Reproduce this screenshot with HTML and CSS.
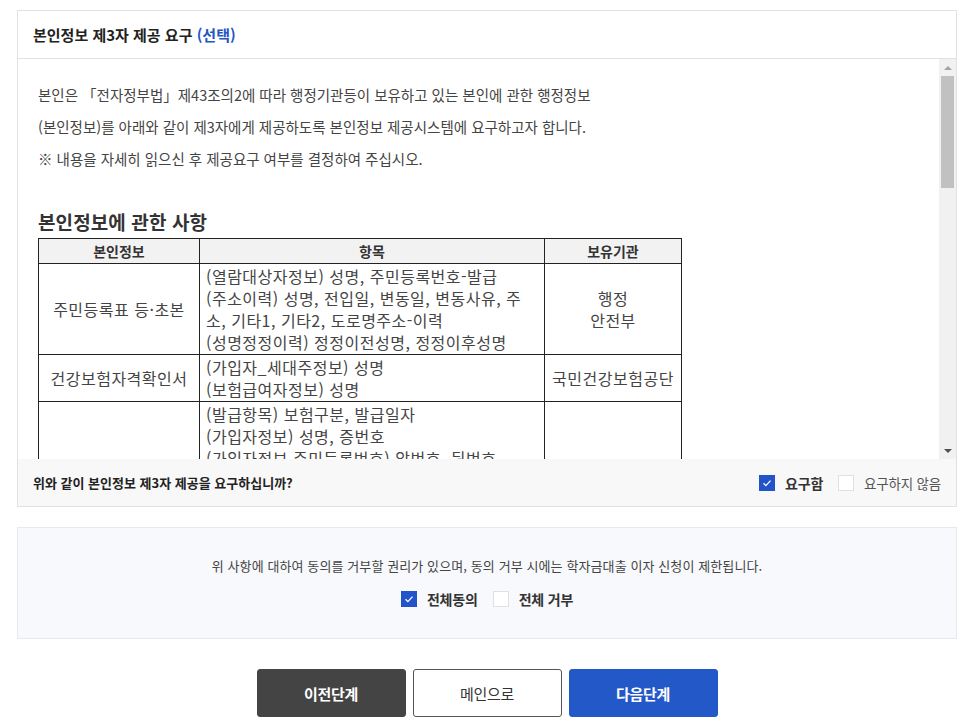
FILE: index.html
```html
<!DOCTYPE html>
<html lang="ko">
<head>
<meta charset="UTF-8">
<title>본인정보 제3자 제공 요구</title>
<link rel="stylesheet" href="styles.css">
</head>
<body>

<div class="agree-box">
  <div class="agree-head">본인정보 제3자 제공 요구 <span class="opt">(선택)</span></div>

  <div class="agree-body">
    <div class="agree-scroll">
      <p>본인은 「전자정부법」제43조의2에 따라 행정기관등이 보유하고 있는 본인에 관한 행정정보</p>
      <p>(본인정보)를 아래와 같이 제3자에게 제공하도록 본인정보 제공시스템에 요구하고자 합니다.</p>
      <p>※ 내용을 자세히 읽으신 후 제공요구 여부를 결정하여 주십시오.</p>

      <h3>본인정보에 관한 사항</h3>
      <table class="info-table">
        <colgroup>
          <col style="width:161px">
          <col style="width:345px">
          <col style="width:137px">
        </colgroup>
        <thead>
          <tr><th>본인정보</th><th>항목</th><th>보유기관</th></tr>
        </thead>
        <tbody>
          <tr>
            <td class="c">주민등록표 등·초본</td>
            <td>(열람대상자정보) 성명, 주민등록번호-발급<br>(주소이력) 성명, 전입일, 변동일, 변동사유, 주<br>소, 기타1, 기타2, 도로명주소-이력<br>(성명정정이력) 정정이전성명, 정정이후성명</td>
            <td class="c">행정<br>안전부</td>
          </tr>
          <tr>
            <td class="c">건강보험자격확인서</td>
            <td>(가입자_세대주정보) 성명<br>(보험급여자정보) 성명</td>
            <td class="c">국민건강보험공단</td>
          </tr>
          <tr>
            <td class="c">건강보험자격득실<br>확인서</td>
            <td>(발급항목) 보험구분, 발급일자<br>(가입자정보) 성명, 증번호<br>(가입자정보 주민등록번호) 앞번호, 뒷번호<br>(자격이력) 가입자구분, 사업장명칭<br>(자격이력) 자격취득일, 자격상실일<br>(세대주정보) 성명, 관계<br>(피부양자정보) 성명, 관계<br>(발급기관) 발급기관명</td>
            <td class="c">국민건강보험공단</td>
          </tr>
          <tr>
            <td class="c">건강보험료<br>납부확인서</td>
            <td>(가입자정보) 성명, 증번호<br>(납부내역) 납부년월, 고지금액<br>(납부내역) 납부금액, 납부일자<br>(발급정보) 발급일자, 발급기관</td>
            <td class="c">국민건강보험공단</td>
          </tr>
          <tr>
            <td class="c">소득금액증명</td>
            <td>(납세자정보) 성명, 주민등록번호<br>(소득내역) 귀속연도, 소득구분<br>(소득내역) 총수입금액, 소득금액<br>(발급정보) 발급번호, 발급일자</td>
            <td class="c">국세청</td>
          </tr>
          <tr>
            <td class="c">가족관계증명서</td>
            <td>(본인정보) 성명, 출생연월일, 주민등록번호<br>(가족정보) 구분, 성명, 출생연월일<br>(가족정보) 주민등록번호, 성별</td>
            <td class="c">법원행정처</td>
          </tr>
        </tbody>
      </table>

      <h3>제공받는 자</h3>
      <p>한국장학재단</p>
      <h3>제공 목적</h3>
      <p>학자금대출 이자지원 신청 자격 확인 및 심사</p>
    </div>
    <div class="scrollbar">
      <span class="sb-arrow up"></span>
      <span class="sb-thumb"></span>
      <span class="sb-track"></span>
      <span class="sb-arrow down"></span>
    </div>
  </div>

  <div class="agree-foot">
    <span class="question">위와 같이 본인정보 제3자 제공을 요구하십니까?</span>
    <div class="checks">
      <label class="chk on"><span class="box"><svg viewBox="0 0 16 16" width="16" height="16"><path d="M4.5 8.2l2.4 2.4 4.6-5" fill="none" stroke="#fff" stroke-width="1.3"/></svg></span><b>요구함</b></label>
      <label class="chk"><span class="box"></span>요구하지 않음</label>
    </div>
  </div>
</div>

<div class="consent-box">
  <p>위 사항에 대하여 동의를 거부할 권리가 있으며, 동의 거부 시에는 학자금대출 이자 신청이 제한됩니다.</p>
  <div class="checks center">
    <label class="chk on"><span class="box"><svg viewBox="0 0 16 16" width="16" height="16"><path d="M4.5 8.2l2.4 2.4 4.6-5" fill="none" stroke="#fff" stroke-width="1.3"/></svg></span><b>전체동의</b></label>
    <label class="chk"><span class="box"></span><b>전체 거부</b></label>
  </div>
</div>

<div class="btn-row">
  <button class="btn dark">이전단계</button>
  <button class="btn line">메인으로</button>
  <button class="btn blue">다음단계</button>
</div>

</body>
</html>
```

FILE: styles.css
```css
body {
  margin: 0;
  padding: 10px 17px 0 17px;
  font-family: "Noto Sans CJK KR", "Noto Sans", sans-serif;
  color: #444;
  background: #fff;
}
.agree-box {
  border: 1px solid #e2e2e2;
}
.agree-head {
  height: 47px;
  line-height: 47px;
  padding-left: 15px;
  border-bottom: 1px solid #e2e2e2;
  font-size: 15px;
  font-weight: bold;
  color: #222;
  letter-spacing: 0;
}
.agree-head .opt {
  color: #2456c4;
}
.agree-body {
  display: flex;
  height: 400px;
}
.agree-scroll {
  flex: 1;
  overflow: hidden;
  padding: 20px 20px 0 20px;
}
.scrollbar {
  width: 17px;
  display: flex;
  flex-direction: column;
  align-items: center;
  background: #f1f1f1;
}
.sb-arrow {
  width: 17px;
  height: 17px;
  display: flex;
  align-items: center;
  justify-content: center;
}
.sb-arrow::before {
  content: "";
  border-left: 4px solid transparent;
  border-right: 4px solid transparent;
}
.sb-arrow.up::before {
  border-bottom: 4px solid #a3a3a3;
}
.sb-arrow.down::before {
  border-top: 4px solid #505050;
}
.sb-thumb {
  width: 13px;
  height: 112px;
  background: #c1c1c1;
}
.sb-track {
  flex: 1;
}
.agree-scroll p {
  margin: 0;
  font-size: 14.5px;
  line-height: 32px;
  color: #444;
  letter-spacing: 0;
}
.agree-scroll h3 {
  margin: 34px 0 3px;
  font-size: 19px;
  line-height: 26px;
  color: #333;
  letter-spacing: 0.1px;
}
.info-table {
  border-collapse: collapse;
  table-layout: fixed;
  font-size: 16px;
  color: #444;
}
.info-table th {
  background: #f2f2f2;
  border: 1px solid #222;
  height: 24px;
  padding: 0;
  font-size: 14px;
  font-weight: bold;
  color: #333;
}
.info-table td {
  border: 1px solid #222;
  padding: 1px 6px;
  line-height: 22px;
  vertical-align: middle;
  white-space: nowrap;
  letter-spacing: 0.5px;
}
.info-table td.c {
  text-align: center;
}
.agree-foot {
  display: flex;
  align-items: center;
  justify-content: space-between;
  height: 47px;
  padding: 0 15px;
  background: #f8f8f8;
}
.question {
  font-size: 13px;
  font-weight: bold;
  color: #222;
}
.checks {
  display: flex;
  align-items: center;
  gap: 15px;
}
.checks.center {
  justify-content: center;
}
.chk {
  display: flex;
  align-items: center;
  gap: 10px;
  font-size: 13.5px;
  color: #555;
  letter-spacing: -0.2px;
}
.chk b {
  color: #333;
  font-size: 14px;
}
.chk .box {
  width: 14px;
  height: 14px;
  border: 1px solid #e0e0e0;
  background: #fff;
  display: block;
}
.chk.on .box {
  border-color: #2253c8;
  background: #2253c8;
}
.chk .box svg {
  display: block;
  margin: -1px;
}
.consent-box {
  margin-top: 20px;
  height: 112px;
  border: 1px solid #e6e9ee;
  background: #f7f9fc;
  box-sizing: border-box;
  padding-top: 28px;
}
.consent-box p {
  margin: 0 0 14px;
  text-align: center;
  font-size: 13px;
  color: #444;
  letter-spacing: 0.1px;
}
.btn-row {
  display: flex;
  justify-content: center;
  gap: 7px;
  margin-top: 30px;
}
.btn {
  width: 149px;
  height: 48px;
  border-radius: 3px;
  font-family: inherit;
  font-size: 15px;
  font-weight: bold;
  letter-spacing: -0.3px;
  cursor: pointer;
}
.btn.dark {
  background: #444;
  border: 1px solid #444;
  color: #fff;
}
.btn.line {
  background: #fff;
  border: 1px solid #555;
  color: #333;
  font-weight: normal;
}
.btn.blue {
  background: #2358c9;
  border: 1px solid #2358c9;
  color: #fff;
}
```
